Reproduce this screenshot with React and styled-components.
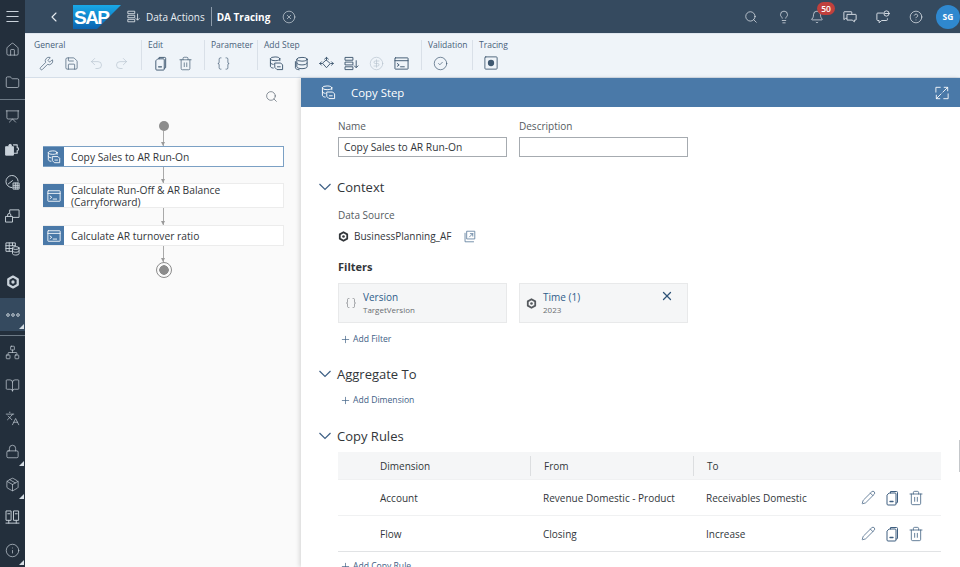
import styled, { createGlobalStyle } from "styled-components";
import {
  Search, Lightbulb, Bell, CircleHelp, House, Folder, Presentation, Wrench, Save, Undo2, Redo2,
  Braces, Trash2, Pencil, ChevronLeft, Plus, X, CircleCheck, Lock, Info, CircleX,
  CircleDollarSign, BookOpen, Package, Network, Languages, Menu,
} from "lucide-react";

const GlobalStyle = createGlobalStyle`
  html, body { margin: 0; padding: 0; height: 100%; overflow: hidden; }
  body { font-family: "Open Sans", "Liberation Sans", sans-serif; color: #32363a; }
  * { box-sizing: border-box; }
`;

const Glyph = styled.svg`
  width: ${(p) => p.$size || 16}px;
  height: ${(p) => p.$size || 16}px;
  flex: none;
  fill: none;
  stroke: currentColor;
  stroke-width: 1;
  stroke-linecap: round;
  stroke-linejoin: round;
`;

const CopyDoc = (p) => (
  <Glyph viewBox="0 0 16 16" {...p}>
    <path d="M6.500 3V1.500h6a1 1 0 0 1 1 1V12a1 1 0 0 1-1 1H12" />
    <path d="M5.500 3H11a1 1 0 0 1 1 1v10a1 1 0 0 1-1 1H4a1 1 0 0 1-1-1V5.500z" />
    <path d="M6 11.500h3" strokeWidth="1.400" />
  </Glyph>
);

const StepCopy = (p) => (
  <Glyph viewBox="0 0 16 16" {...p}>
    <ellipse cx="6.500" cy="3" rx="5" ry="2" />
    <path d="M1.500 3v8c0 1 1.200 1.700 3 1.900M1.500 7c0 1 1.200 1.700 3 1.900M11.500 3v2" />
    <path d="M6.500 7.500h6l2 2v5h-6l-2-2z" />
    <path d="M9 11.500h3" />
  </Glyph>
);

const StepStack = (p) => (
  <Glyph viewBox="0 0 16 16" {...p}>
    <ellipse cx="8.500" cy="3.500" rx="5.500" ry="2" />
    <path d="M3 3.500v8c0 1.100 2.400 2 5.500 2s5.500-.9 5.500-2v-8M3 7.500c0 1.100 2.400 2 5.500 2s5.500-.9 5.500-2" />
    <path d="M1.500 6v6.500c0 1 1.400 2 4 2.200" />
  </Glyph>
);

const StepSplit = (p) => (
  <Glyph viewBox="0 0 16 16" {...p}>
    <path d="M8 1.500v3M6 3.300 8 1.500l2 1.800" />
    <path d="M0.800 8h2.500M12.700 8h2.500M2.600 6.200.8 8l1.800 1.800M13.400 6.200 15.200 8l-1.800 1.800" />
    <path d="M8 4.500 12 8l-4 4.500L4 8z" />
  </Glyph>
);

const StepList = (p) => (
  <Glyph viewBox="0 0 16 16" {...p}>
    <rect x="1.500" y="1.500" width="8" height="3" />
    <rect x="1.500" y="6.500" width="8" height="3" />
    <rect x="1.500" y="11.500" width="8" height="3" />
    <path d="M13 5v7M11 10.500l2 2 2-2" />
  </Glyph>
);

const StepScript = (p) => (
  <Glyph viewBox="0 0 16 16" {...p}>
    <rect x="1" y="2" width="14" height="12" rx="0.500" />
    <path d="M1 5h14M3.500 8l2 1.500-2 1.500M7 11.500h4" />
  </Glyph>
);

const ModelCube = (p) => (
  <Glyph viewBox="0 0 16 16" {...p}>
    <path d="M8 1.800 13.400 4.900v6.200L8 14.200 2.600 11.100V4.900z" strokeWidth="2.600" />
    <circle cx="8" cy="8" r="1.900" fill="currentColor" stroke="none" />
  </Glyph>
);

const OpenExternal = (p) => (
  <Glyph viewBox="0 0 16 16" {...p}>
    <path d="M2.500 4v10.500H13" />
    <rect x="5" y="1.500" width="9.500" height="9.500" />
    <path d="M8 8.500 12 4.500M9 4.500h3v3" />
  </Glyph>
);

const Expand = (p) => (
  <Glyph viewBox="0 0 16 16" {...p}>
    <path d="M1 7V1.500h5M15 9v5.500h-5" />
    <path d="M9 7l5.500-5.500M10.500 1.500h4v4M7 9l-5.500 5.500M1.500 10.500v4h4" />
  </Glyph>
);

const RecordStop = (p) => (
  <Glyph viewBox="0 0 16 16" {...p}>
    <rect x="1" y="1" width="14" height="14" rx="1" />
    <circle cx="8" cy="8" r="3.600" fill="currentColor" stroke="none" />
  </Glyph>
);

const Chat = (p) => (
  <Glyph viewBox="0 0 16 16" {...p}>
    <path d="M4 9.500H3l-2 1.500V2.500a.5.5 0 0 1 .5-.5h8a.5.5 0 0 1 .5.5V4" />
    <path d="M5 5h9.500a.5.5 0 0 1 .5.5V11a.5.5 0 0 1-.5.5H13v2l-2.500-2H5z" />
  </Glyph>
);

const ChatUser = (p) => (
  <Glyph viewBox="0 0 16 16" {...p}>
    <path d="M8 3.500H2a1 1 0 0 0-1 1v6.500a1 1 0 0 0 1 1h1.500v2.500l3-2.500H12a1 1 0 0 0 1-1v-1" />
    <circle cx="12" cy="4" r="3" />
    <path d="M10 4h4" />
  </Glyph>
);

const Puzzle = (p) => (
  <Glyph viewBox="0 0 16 16" {...p}>
    <path d="M1 5h3V4a1.500 1.500 0 0 1 3 0v1h2v9H1z" fill="currentColor" />
    <path d="M9 3h4v3a1.500 1.500 0 0 1 0 3v3H9" strokeWidth="1.200" />
  </Glyph>
);

const Gauge = (p) => (
  <Glyph viewBox="0 0 16 16" {...p}>
    <path d="M7.500 13.500a6.500 6.500 0 1 1 6.500-7" />
    <path d="M3.500 9.500 8 6" />
    <path d="M9 8.500h6v6.500H9zM9 11h6M9 13h6M11 8.500V15M13 8.500V15" />
  </Glyph>
);

const Board = (p) => (
  <Glyph viewBox="0 0 16 16" {...p}>
    <path d="M5 5V2h10v8H9" />
    <rect x="1" y="9" width="7" height="6" />
    <path d="M2.800 9V7.500a1.700 1.700 0 0 1 3.400 0V9" />
  </Glyph>
);

const TableDb = (p) => (
  <Glyph viewBox="0 0 16 16" {...p}>
    <path d="M7 11H1V2h10v3M1 5h10M1 8h6M4.500 2v9M8 2v3" />
    <ellipse cx="11.500" cy="7.500" rx="3.500" ry="1.500" />
    <path d="M8 7.500v6c0 .8 1.600 1.500 3.500 1.500s3.500-.7 3.500-1.500v-6M8 10.500c0 .8 1.600 1.500 3.500 1.500s3.500-.7 3.500-1.500" />
  </Glyph>
);

const Racks = (p) => (
  <Glyph viewBox="0 0 16 16" {...p}>
    <rect x="1.500" y="1" width="5" height="10" />
    <rect x="9.500" y="1" width="5" height="10" />
    <path d="M3 4h2M11 4h2M4 11v3M12 11v3M1 14h14" />
  </Glyph>
);

const Chevron = styled.svg`
  width: 12px;
  height: 8px;
  flex: none;
  fill: none;
  stroke: #3e6085;
  stroke-width: 1.200;
`;

const Page = styled.div`
  display: flex;
  width: 960px;
  height: 567px;
  overflow: hidden;
  position: relative;
`;

const Rail = styled.nav`
  width: 25px;
  flex: none;
  display: flex;
  flex-direction: column;
  background: #232f3c;
  color: #c9d2da;
`;

const RailItem = styled.div`
  height: 33px;
  flex: none;
  display: flex;
  align-items: center;
  justify-content: center;
  position: relative;
  background: ${(p) => (p.$active ? "#354a5f" : "transparent")};
  &::after {
    content: ${(p) => (p.$corner ? '""' : "none")};
    position: absolute;
    right: 1px;
    bottom: 2px;
    border-style: solid;
    border-width: 0 0 5px 5px;
    border-color: transparent transparent #d5dde4 transparent;
  }
`;

const RailRule = styled.div`
  height: 1px;
  margin: ${(p) => p.$gap || "0"};
  flex: none;
  background: #6d7a86;
`;

const Main = styled.div`
  flex: 1;
  min-width: 0;
  display: flex;
  flex-direction: column;
`;

const Shell = styled.header`
  height: 33px;
  flex: none;
  display: flex;
  align-items: center;
  background: #354a5f;
  color: #e8edf2;
`;

const BackButton = styled.div`
  display: flex;
  width: 48px;
  padding-left: 21px;
`;

const Logo = styled.svg`
  width: 48px;
  height: 24px;
  flex: none;
  margin: 0 6px 0 0;
`;

const Crumb = styled.span`
  font-size: 10px;
  margin-left: 6px;
`;

const CrumbRule = styled.span`
  width: 1px;
  height: 19px;
  background: #8e9cab;
  margin: 0 5px 0 6px;
`;

const CrumbTitle = styled.span`
  font-size: 10px;
  font-weight: 700;
  color: #fff;
`;

const CloseCircle = styled.span`
  display: flex;
  margin-left: 12px;
`;

const ShellTools = styled.div`
  margin-left: auto;
  display: flex;
  align-items: center;
`;

const ShellTool = styled.div`
  width: 33px;
  height: 33px;
  display: flex;
  align-items: center;
  justify-content: center;
  position: relative;
`;

const Badge = styled.span`
  position: absolute;
  top: 2px;
  left: 17px;
  width: 18px;
  height: 13px;
  border-radius: 7px;
  background: #c0403d;
  color: #fff;
  font-size: 8.500px;
  font-weight: 600;
  display: flex;
  align-items: center;
  justify-content: center;
`;

const Avatar = styled.div`
  width: 24px;
  height: 24px;
  margin-left: 4px;
  border-radius: 50%;
  background: #2f88cf;
  color: #fff;
  font-size: 8.500px;
  font-weight: 700;
  display: flex;
  align-items: center;
  justify-content: center;
`;

const Toolbar = styled.div`
  height: 45px;
  flex: none;
  display: flex;
  padding: 6px 0 0 0;
  background: #eff4f9;
  border-top: 1px solid #dfe6ee;
  border-bottom: 1px solid #d5dee8;
  color: #48617a;
`;

const Group = styled.div`
  width: ${(p) => p.$w}px;
  padding-left: ${(p) => (p.$first ? 9 : 6)}px;
  border-left: ${(p) => (p.$first ? "none" : "1px solid #d9e0e8")};
  height: 30px;
  display: flex;
  flex-direction: column;
`;

const GroupLabel = styled.div`
  font-size: 8.500px;
  line-height: 10px;
  height: 10px;
  white-space: nowrap;
  margin-bottom: 6px;
`;

const GroupIcons = styled.div`
  display: flex;
  gap: 10px;
  margin-left: 5px;
  color: #3f5870;
`;

const Faded = styled.span`
  display: flex;
  color: #b7c3cf;
`;

const Work = styled.div`
  flex: 1;
  min-height: 0;
  display: flex;
`;

const FlowPane = styled.aside`
  width: 276px;
  flex: none;
  background: #fafafa;
  padding: 12px 0 0 18px;
`;

const FlowSearch = styled.div`
  display: flex;
  justify-content: flex-end;
  padding-right: 23px;
  color: #4d5a66;
  height: 13px;
`;

const FlowColumn = styled.div`
  width: 241px;
  margin-top: 18px;
  display: flex;
  flex-direction: column;
  align-items: center;
`;

const StartDot = styled.div`
  width: 10px;
  height: 10px;
  border-radius: 50%;
  background: #8c8c8c;
`;

const EndDot = styled.div`
  width: 16px;
  height: 16px;
  border-radius: 50%;
  border: 1px solid #8c8c8c;
  background: radial-gradient(circle, #8c8c8c 0 4.500px, #fafafa 5px);
`;

const Connector = styled.div`
  width: 1px;
  height: ${(p) => p.$h}px;
  background: #a9a9a9;
  position: relative;
  &::after {
    content: "";
    position: absolute;
    left: -2px;
    bottom: 0;
    border-style: solid;
    border-width: 4px 2.500px 0 2.500px;
    border-color: #9a9a9a transparent transparent transparent;
  }
`;

const Node = styled.div`
  width: 241px;
  height: ${(p) => p.$h}px;
  display: flex;
  align-items: stretch;
  background: #fff;
  border: 1px solid ${(p) => (p.$selected ? "#7ba0c4" : "#ececec")};
  border-left: none;
`;

const NodeIcon = styled.div`
  width: 21px;
  flex: none;
  display: flex;
  align-items: center;
  justify-content: center;
  background: #4a79a8;
  color: #fff;
`;

const NodeText = styled.div`
  flex: 1;
  padding-left: 7px;
  display: flex;
  align-items: center;
  font-size: 10.250px;
  line-height: 12px;
  color: #32363a;
`;

const Detail = styled.section`
  flex: 1;
  min-width: 0;
  background: #fff;
  display: flex;
  flex-direction: column;
  box-shadow: -2px 0 4px rgba(0, 0, 0, 0.12);
`;

const DetailBar = styled.div`
  height: 29px;
  flex: none;
  display: flex;
  align-items: center;
  padding: 0 11px 0 20px;
  background: #4a79a8;
  color: #fff;
  font-size: 11.400px;
`;

const BarTitle = styled.span`
  margin-left: 15px;
  flex: 1;
`;

const DetailBody = styled.div`
  flex: 1;
  min-height: 0;
  overflow: hidden;
  padding: 13px 19px 0 37px;
`;

const FieldRow = styled.div`
  display: flex;
  gap: 12px;
`;

const Field = styled.label`
  width: 169px;
  display: flex;
  flex-direction: column;
  font-size: 10px;
  line-height: 12px;
  color: #555b61;
`;

const Input = styled.div`
  margin-top: 5px;
  height: 20px;
  border: 1px solid #a6abb0;
  background: #fff;
  padding-left: 5px;
  display: flex;
  align-items: center;
  font-size: 10.250px;
  color: #32363a;
`;

const SectionHead = styled.div`
  display: flex;
  align-items: center;
  margin: ${(p) => p.$m || "0"};
  margin-left: -19px;
  height: 16px;
  font-size: 13px;
  color: #32363a;
  gap: 6px;
`;

const Caption = styled.div`
  font-size: 10px;
  line-height: 12px;
  color: #555b61;
  margin-top: 14px;
`;

const SourceRow = styled.div`
  display: flex;
  align-items: center;
  margin-top: 8px;
  height: 14px;
  font-size: 10px;
  color: #32363a;
  gap: 5px;
`;

const SourceLink = styled.span`
  display: flex;
  margin-left: 7px;
  color: #5a7a9a;
`;

const SubHead = styled.div`
  margin-top: 17px;
  font-size: 11px;
  line-height: 14px;
  font-weight: 700;
  color: #32363a;
`;

const FilterRow = styled.div`
  display: flex;
  gap: 12px;
  margin-top: 9px;
`;

const FilterCard = styled.div`
  width: 169px;
  height: 40px;
  background: #f5f6f7;
  border: 1px solid #e8e9ea;
  display: flex;
  align-items: center;
  padding: 0 14px 0 6px;
  gap: 6px;
  color: #55595e;
  position: relative;
`;

const FilterText = styled.div`
  display: flex;
  flex-direction: column;
  margin-top: -1px;
`;

const FilterName = styled.div`
  font-size: 10px;
  line-height: 14px;
  color: #2f5d8a;
`;

const FilterValue = styled.div`
  font-size: 8px;
  line-height: 12px;
  color: #6a6d70;
`;

const FilterClose = styled.span`
  position: absolute;
  right: 13px;
  top: 5px;
  display: flex;
  color: #2f5378;
`;

const AddLink = styled.div`
  display: flex;
  align-items: center;
  gap: 2px;
  margin: ${(p) => p.$m || "0"};
  margin-left: 2px;
  height: 14px;
  font-size: 8.600px;
  color: #3e6085;
`;

const Rules = styled.div`
  margin-top: 8px;
  font-size: 10px;
  color: #32363a;
`;

const RuleRow = styled.div`
  display: grid;
  grid-template-columns: 192px 163px 1fr;
  align-items: center;
  height: ${(p) => p.$h}px;
  background: ${(p) => (p.$head ? "#f5f6f7" : "#fff")};
  border-bottom: 1px solid ${(p) => (p.$strong ? "#e1e3e5" : "#f0f1f2")};
`;

const Cell = styled.div`
  padding-left: ${(p) => (p.$first ? 42 : 13)}px;
  height: 20px;
  display: flex;
  align-items: center;
  border-left: ${(p) => (p.$rule ? "1px solid #dcdee0" : "none")};
`;

const RowActions = styled.div`
  margin-left: auto;
  padding-right: 17px;
  display: flex;
  gap: 8px;
  color: #3f5f80;
`;

const ScrollThumb = styled.div`
  position: absolute;
  right: 0;
  top: 440px;
  width: 1px;
  height: 32px;
  background: #c4c7ca;
`;

const SectionChevron = () => (
  <Chevron viewBox="0 0 12 8"><path d="M.5 1 6 6.500 11.500 1" /></Chevron>
);

const RuleActions = () => (
  <RowActions>
    <Pencil size={15} strokeWidth={1.2} />
    <CopyDoc />
    <Trash2 size={16} strokeWidth={1.2} />
  </RowActions>
);

const railTop = [
  { icon: <House size={15} strokeWidth={1.1} /> },
  { icon: <Folder size={15} strokeWidth={1.1} /> },
];

const railMid = [
  { icon: <Presentation size={15} strokeWidth={1.1} /> },
  { icon: <Puzzle $size={15} /> },
  { icon: <Gauge $size={15} /> },
  { icon: <Board $size={15} /> },
  { icon: <TableDb $size={15} /> },
  { icon: <ModelCube $size={14} /> },
];

const railEnd = [
  { icon: <Network size={15} strokeWidth={1.1} /> },
  { icon: <BookOpen size={15} strokeWidth={1.1} /> },
  { icon: <Languages size={15} strokeWidth={1.1} /> },
  { icon: <Lock size={15} strokeWidth={1.1} />, corner: true },
  { icon: <Package size={15} strokeWidth={1.1} />, corner: true },
  { icon: <Racks $size={15} /> },
  { icon: <Info size={15} strokeWidth={1.1} />, corner: true },
];

export default function App() {
  return (
    <Page>
      <GlobalStyle />
      <Rail>
        <RailItem><Menu size={17} strokeWidth={1.5} /></RailItem>
        {railTop.map((r, i) => <RailItem key={i}>{r.icon}</RailItem>)}
        <RailRule />
        {railMid.map((r, i) => <RailItem key={i}>{r.icon}</RailItem>)}
        <RailItem $active $corner>
          <svg width="14" height="4" viewBox="0 0 14 4" fill="none" stroke="currentColor">
            <circle cx="2" cy="2" r="1.300" />
            <circle cx="7" cy="2" r="1.300" />
            <circle cx="12" cy="2" r="1.300" />
          </svg>
        </RailItem>
        <RailRule $gap="4px 0 0" />
        {railEnd.map((r, i) => <RailItem key={i} $corner={r.corner}>{r.icon}</RailItem>)}
      </Rail>

      <Main>
        <Shell>
          <BackButton><ChevronLeft size={16} strokeWidth={1.6} /></BackButton>
          <Logo viewBox="0 0 48 24">
            <defs>
              <linearGradient id="sapBlue" x1="0" y1="0" x2="0" y2="1">
                <stop offset="0" stopColor="#19a9e8" />
                <stop offset="1" stopColor="#0b63b0" />
              </linearGradient>
            </defs>
            <polygon points="0,0 48,0 24,24 0,24" fill="url(#sapBlue)" />
            <text x="1" y="19" fontFamily="Liberation Sans, sans-serif" fontSize="19" fontWeight="700" fill="#fff" textLength="36">SAP</text>
          </Logo>
          <StepList $size={13} />
          <Crumb>Data Actions</Crumb>
          <CrumbRule />
          <CrumbTitle>DA Tracing</CrumbTitle>
          <CloseCircle><CircleX size={14} strokeWidth={1} /></CloseCircle>
          <ShellTools>
            <ShellTool><Search size={14} strokeWidth={1.2} /></ShellTool>
            <ShellTool><Lightbulb size={14} strokeWidth={1.2} /></ShellTool>
            <ShellTool><Bell size={14} strokeWidth={1.2} /><Badge>50</Badge></ShellTool>
            <ShellTool><Chat $size={14} /></ShellTool>
            <ShellTool><ChatUser $size={14} /></ShellTool>
            <ShellTool><CircleHelp size={14} strokeWidth={1.2} /></ShellTool>
            <Avatar>SG</Avatar>
          </ShellTools>
        </Shell>

        <Toolbar>
          <Group $first $w={116}>
            <GroupLabel>General</GroupLabel>
            <GroupIcons>
              <Wrench size={15} strokeWidth={1.1} />
              <Save size={15} strokeWidth={1.1} />
              <Faded><Undo2 size={15} strokeWidth={1.1} /></Faded>
              <Faded><Redo2 size={15} strokeWidth={1.1} /></Faded>
            </GroupIcons>
          </Group>
          <Group $w={63}>
            <GroupLabel>Edit</GroupLabel>
            <GroupIcons>
              <CopyDoc $size={15} />
              <Trash2 size={15} strokeWidth={1.1} />
            </GroupIcons>
          </Group>
          <Group $w={53}>
            <GroupLabel>Parameter</GroupLabel>
            <GroupIcons>
              <Braces size={15} strokeWidth={1.1} />
            </GroupIcons>
          </Group>
          <Group $w={164}>
            <GroupLabel>Add Step</GroupLabel>
            <GroupIcons>
              <StepCopy $size={15} />
              <StepStack $size={15} />
              <StepSplit $size={15} />
              <StepList $size={15} />
              <Faded><CircleDollarSign size={15} strokeWidth={1.1} /></Faded>
              <StepScript $size={15} />
            </GroupIcons>
          </Group>
          <Group $w={51}>
            <GroupLabel>Validation</GroupLabel>
            <GroupIcons>
              <CircleCheck size={15} strokeWidth={1.1} />
            </GroupIcons>
          </Group>
          <Group $w={60}>
            <GroupLabel>Tracing</GroupLabel>
            <GroupIcons>
              <RecordStop $size={14} />
            </GroupIcons>
          </Group>
        </Toolbar>

        <Work>
          <FlowPane>
            <FlowSearch><Search size={13} strokeWidth={1.2} /></FlowSearch>
            <FlowColumn>
              <StartDot />
              <Connector $h={15} />
              <Node $selected $h={21}>
                <NodeIcon><StepCopy $size={14} /></NodeIcon>
                <NodeText>Copy Sales to AR Run-On</NodeText>
              </Node>
              <Connector $h={16} />
              <Node $h={25}>
                <NodeIcon><StepScript $size={14} /></NodeIcon>
                <NodeText>Calculate Run-Off &amp; AR Balance<br />(Carryforward)</NodeText>
              </Node>
              <Connector $h={17} />
              <Node $h={21}>
                <NodeIcon><StepScript $size={14} /></NodeIcon>
                <NodeText>Calculate AR turnover ratio</NodeText>
              </Node>
              <Connector $h={16} />
              <EndDot />
            </FlowColumn>
          </FlowPane>

          <Detail>
            <DetailBar>
              <StepCopy $size={15} />
              <BarTitle>Copy Step</BarTitle>
              <Expand $size={14} />
            </DetailBar>
            <DetailBody>
              <FieldRow>
                <Field>Name<Input>Copy Sales to AR Run-On</Input></Field>
                <Field>Description<Input /></Field>
              </FieldRow>

              <SectionHead $m="22px 0 0"><SectionChevron />Context</SectionHead>
              <Caption>Data Source</Caption>
              <SourceRow>
                <ModelCube $size={11} />
                BusinessPlanning_AF
                <SourceLink><OpenExternal $size={13} /></SourceLink>
              </SourceRow>
              <SubHead>Filters</SubHead>
              <FilterRow>
                <FilterCard>
                  <Braces size={12} strokeWidth={1} />
                  <FilterText>
                    <FilterName>Version</FilterName>
                    <FilterValue>TargetVersion</FilterValue>
                  </FilterText>
                </FilterCard>
                <FilterCard>
                  <ModelCube $size={11} />
                  <FilterText>
                    <FilterName>Time (1)</FilterName>
                    <FilterValue>2023</FilterValue>
                  </FilterText>
                  <FilterClose><X size={14} strokeWidth={2.2} /></FilterClose>
                </FilterCard>
              </FilterRow>
              <AddLink $m="9px 0 0"><Plus size={11} strokeWidth={1.5} />Add Filter</AddLink>

              <SectionHead $m="20px 0 0"><SectionChevron />Aggregate To</SectionHead>
              <AddLink $m="11px 0 0"><Plus size={11} strokeWidth={1.5} />Add Dimension</AddLink>

              <SectionHead $m="21px 0 0"><SectionChevron />Copy Rules</SectionHead>
              <Rules>
                <RuleRow $head $h={28}>
                  <Cell $first>Dimension</Cell>
                  <Cell $rule>From</Cell>
                  <Cell $rule>To</Cell>
                </RuleRow>
                <RuleRow $h={36}>
                  <Cell $first>Account</Cell>
                  <Cell>Revenue Domestic - Product</Cell>
                  <Cell>Receivables Domestic<RuleActions /></Cell>
                </RuleRow>
                <RuleRow $h={36} $strong>
                  <Cell $first>Flow</Cell>
                  <Cell>Closing</Cell>
                  <Cell>Increase<RuleActions /></Cell>
                </RuleRow>
              </Rules>
              <AddLink $m="7px 0 0"><Plus size={11} strokeWidth={1.5} />Add Copy Rule</AddLink>
            </DetailBody>
          </Detail>
        </Work>
      </Main>
      <ScrollThumb />
    </Page>
  );
}
